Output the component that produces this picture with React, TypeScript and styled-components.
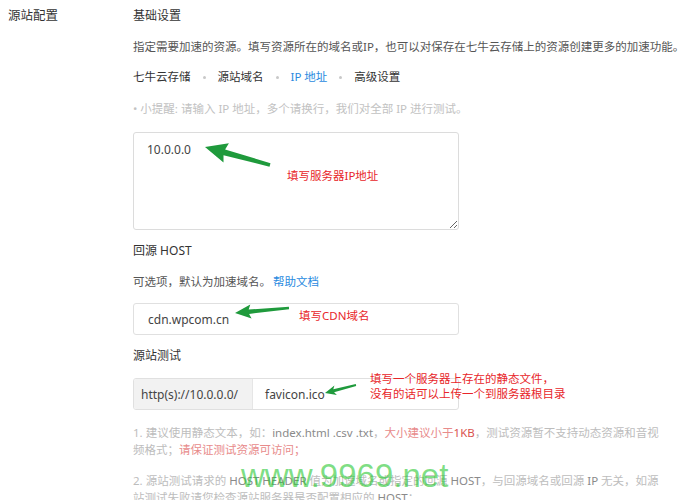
import React from "react";
import styled, { createGlobalStyle } from "styled-components";

const GlobalStyle = createGlobalStyle`
  html, body {
    margin: 0;
    padding: 0;
    background: #ffffff;
  }
  body {
    font-family: "Noto Sans", "Noto Sans CJK SC", sans-serif;
    color: #333;
    -webkit-font-smoothing: antialiased;
  }
`;

const Page = styled.div`
  position: relative;
  display: grid;
  grid-template-columns: 133px 1fr;
  width: 686px;
  height: 500px;
  overflow: hidden;
`;

const SideLabel = styled.div`
  padding: 6px 0 0 8px;
  font-size: 12.5px;
  line-height: 20px;
  color: #333;
`;

const Content = styled.div`
  display: flex;
  flex-direction: column;
  padding-top: 6px;
`;

const Heading = styled.div<{ $gap?: number }>`
  margin-top: ${(p) => p.$gap ?? 0}px;
  font-size: 12px;
  line-height: 20px;
  color: #333;
`;

const Text = styled.div<{ $gap?: number }>`
  margin-top: ${(p) => p.$gap ?? 0}px;
  font-size: 11.5px;
  line-height: 20px;
  color: #555;
  white-space: nowrap;
`;

const Link = styled.a`
  color: #2a8ae0;
  text-decoration: none;
  margin-left: 2px;
`;

const Tabs = styled.div`
  margin-top: 10px;
  display: flex;
  align-items: center;
  gap: 12px;
  font-size: 11.5px;
  line-height: 20px;
`;

const Tab = styled.span<{ $active?: boolean }>`
  color: ${(p) => (p.$active ? "#2a8ae0" : "#333")};
`;

const Dot = styled.span`
  width: 3px;
  height: 3px;
  border-radius: 50%;
  background: #c8c8c8;
`;

const Hint = styled.div`
  margin-top: 12px;
  font-size: 11.5px;
  line-height: 20px;
  color: #c2c2c2;
  white-space: nowrap;
`;

const Field = styled.div<{ $gap: number }>`
  position: relative;
  margin-top: ${(p) => p.$gap}px;
  width: 326px;
`;

const Area = styled.textarea`
  display: block;
  box-sizing: border-box;
  width: 326px;
  height: 98px;
  padding: 8px 13px;
  border: 1px solid #dcdcdc;
  border-radius: 3px;
  font-family: "Noto Sans", "Noto Sans CJK SC", sans-serif;
  font-size: 12px;
  line-height: 17px;
  color: #444;
  outline: none;
  resize: vertical;
`;

const Input = styled.div`
  box-sizing: border-box;
  height: 32px;
  display: flex;
  align-items: center;
  padding: 0 14px;
  border: 1px solid #e0e0e0;
  border-radius: 3px;
  font-size: 12px;
  color: #444;
`;

const Group = styled.div`
  box-sizing: border-box;
  height: 32px;
  display: flex;
  border: 1px solid #e0e0e0;
  border-radius: 3px;
  overflow: hidden;
  font-size: 12px;
  color: #444;
`;

const Prefix = styled.div`
  width: 119px;
  display: flex;
  align-items: center;
  padding-left: 7px;
  box-sizing: border-box;
  background: #f2f2f2;
  border-right: 1px solid #e6e6e6;
`;

const GroupValue = styled.div`
  flex: 1;
  display: flex;
  align-items: center;
  padding-left: 12px;
`;

const Note = styled.div<{ $gap: number }>`
  margin-top: ${(p) => p.$gap}px;
  font-size: 11.5px;
  line-height: 17px;
  color: #bdbdbd;
  white-space: nowrap;
`;

const Dark = styled.span`
  color: #8a8a8a;
`;

const Warn = styled.span<{ $strong?: boolean }>`
  color: ${(p) => (p.$strong ? "#d9534f" : "#e88b8b")};
`;

const Callout = styled.div<{ $x: number; $y: number }>`
  position: absolute;
  left: ${(p) => p.$x}px;
  top: ${(p) => p.$y}px;
  font-size: 11.5px;
  line-height: 15px;
  color: #e8262a;
  white-space: nowrap;
`;

const ArrowSvg = styled.svg`
  position: absolute;
  left: 0;
  top: 0;
  overflow: visible;
  pointer-events: none;
`;

const Watermark = styled.div`
  position: absolute;
  left: 241px;
  top: 456px;
  font-family: "Liberation Sans", Arial, sans-serif;
  font-size: 33px;
  line-height: 40px;
  color: rgba(40, 200, 50, 0.6);
  pointer-events: none;
`;

interface ArrowProps {
  tip: [number, number];
  tail: [number, number];
  head: number;
  spread: number;
  shaft: number;
}

// green annotation arrow, pointing from tail to tip
const Arrow: React.FC<ArrowProps> = ({ tip, tail, head, spread, shaft }) => {
  const dx = tail[0] - tip[0];
  const dy = tail[1] - tip[1];
  const len = Math.hypot(dx, dy);
  const ux = dx / len;
  const uy = dy / len;
  const nx = -uy;
  const ny = ux;
  const bx = tip[0] + ux * head;
  const by = tip[1] + uy * head;
  const pts = [
    [tip[0], tip[1]],
    [bx + nx * spread, by + ny * spread],
    [bx + ux * -2 + nx * shaft, by + uy * -2 + ny * shaft],
    [tail[0] + nx * shaft * 0.6, tail[1] + ny * shaft * 0.6],
    [tail[0] - nx * shaft * 0.6, tail[1] - ny * shaft * 0.6],
    [bx + ux * -2 - nx * shaft, by + uy * -2 - ny * shaft],
    [bx - nx * spread, by - ny * spread],
  ]
    .map((p) => `${p[0].toFixed(1)},${p[1].toFixed(1)}`)
    .join(" ");
  return (
    <ArrowSvg width="1" height="1">
      <polygon points={pts} fill="#1f9a3c" />
    </ArrowSvg>
  );
};

export default function App() {
  return (
    <>
      <GlobalStyle />
      <Page>
        <SideLabel>源站配置</SideLabel>
        <Content>
          <Heading>基础设置</Heading>
          <Text $gap={11}>
            指定需要加速的资源。填写资源所在的域名或IP，也可以对保存在七牛云存储上的资源创建更多的加速功能。
          </Text>
          <Tabs>
            <Tab>七牛云存储</Tab>
            <Dot />
            <Tab>源站域名</Tab>
            <Dot />
            <Tab $active>IP 地址</Tab>
            <Dot />
            <Tab>高级设置</Tab>
          </Tabs>
          <Hint>• 小提醒: 请输入 IP 地址，多个请换行，我们对全部 IP 进行测试。</Hint>

          <Field $gap={13}>
            <Area readOnly value="10.0.0.0" />
            <Arrow tip={[72, 15]} tail={[137, 33]} head={22} spread={10} shaft={3} />
            <Callout $x={154} $y={36}>填写服务器IP地址</Callout>
          </Field>

          <Heading $gap={11}>回源 HOST</Heading>
          <Text $gap={11}>
            可选项，默认为加速域名。<Link href="#">帮助文档</Link>
          </Text>

          <Field $gap={11}>
            <Input>cdn.wpcom.cn</Input>
            <Arrow tip={[102, 10]} tail={[156, 5]} head={16} spread={7} shaft={2.2} />
            <Callout $x={166} $y={5}>填写CDN域名</Callout>
          </Field>

          <Heading $gap={11}>源站测试</Heading>

          <Field $gap={12}>
            <Group>
              <Prefix>http(s)://10.0.0.0/</Prefix>
              <GroupValue>favicon.ico</GroupValue>
            </Group>
            <Arrow tip={[192, 15]} tail={[223, 7]} head={11} spread={5} shaft={1.6} />
            <Callout $x={237} $y={-7}>
              填写一个服务器上存在的静态文件，
              <br />
              没有的话可以上传一个到服务器根目录
            </Callout>
          </Field>

          <Note $gap={14}>
            1. 建议使用静态文本，如：<Dark>index.html .csv .txt</Dark>，
            <Warn>大小建议小于</Warn>
            <Warn $strong>1KB</Warn>，测试资源暂不支持动态资源和音视
            <br />
            频格式；<Warn>请保证测试资源可访问；</Warn>
          </Note>
          <Note $gap={14}>
            2. 源站测试请求的 <Dark>HOST HEADER</Dark> 值为加速域名或指定的回源{" "}
            <Dark>HOST</Dark>，与回源域名或回源 <Dark>IP</Dark> 无关，如源
            <br />
            站测试失败请您检查源站服务器是否配置相应的 <Dark>HOST</Dark>；
          </Note>
        </Content>
        <Watermark>www.9969.net</Watermark>
      </Page>
    </>
  );
}
